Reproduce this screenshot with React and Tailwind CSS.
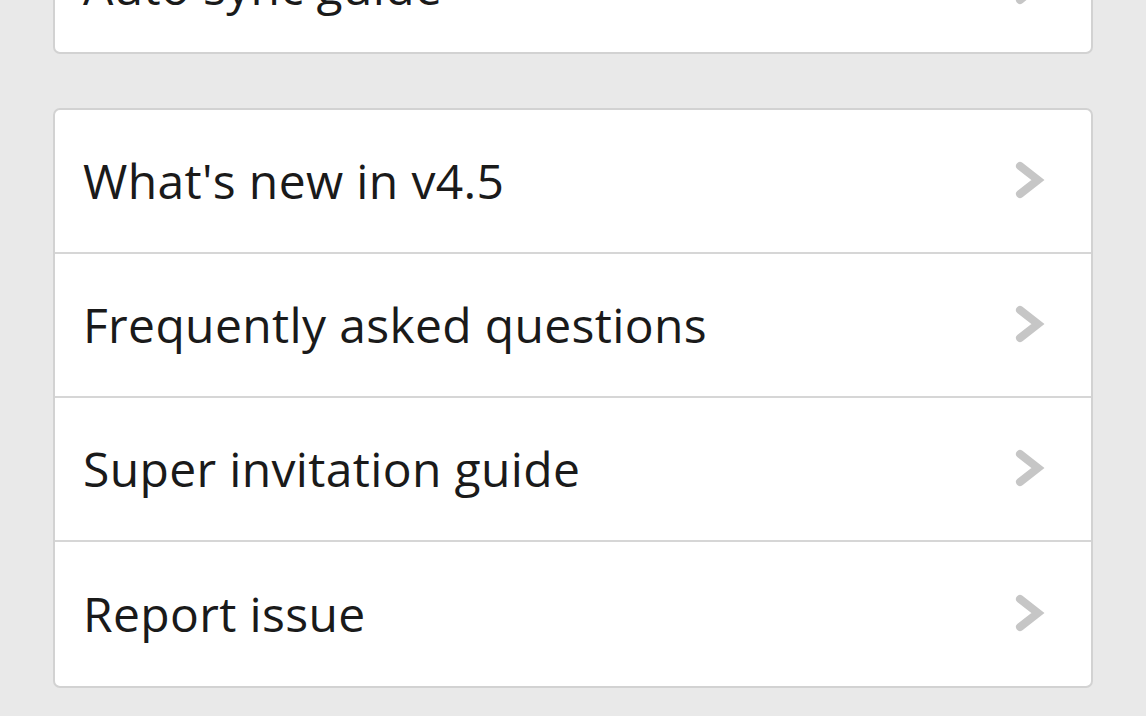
import { useState } from 'react';

const Chevron = () => (
    <svg width="36" height="40" viewBox="0 0 36 40" className="shrink-0">
        <path d="M9 5 L27 19 L9 33" fill="none" stroke="#c6c6c6" strokeWidth="8" strokeLinecap="round" strokeLinejoin="miter" />
    </svg>
);

function Row({ label, last, extra }) {
    return (
        <div className={'flex items-center justify-between h-[144px] pl-[28px] pr-[44px] ' + (extra || '') + ' ' + (last ? '' : 'border-b-2 border-[#d6d6d6]')}>
            <span className="text-[48px] text-[#1a1a1a] tracking-[0.35px]">{label}</span>
            <Chevron />
        </div>
    );
}

function App() {
    const [items] = useState([
        "What's new in v4.5",
        'Frequently asked questions',
        'Super invitation guide',
        'Report issue',
    ]);

    return (
        <div className="w-[1146px] h-[716px] overflow-hidden bg-[#e9e9e9] px-[53px]" style={{ fontFamily: '"Open Sans", "Noto Sans", sans-serif' }}>
            {/* card cut off at the top */}
            <div className="-mt-[94px] bg-white rounded-[7px] border-2 border-[#d2d2d2]">
                <Row label="Auto sync guide" last extra="pt-[14px]" />
            </div>

            <div className="mt-[54px] bg-white rounded-[7px] border-2 border-[#d2d2d2] overflow-hidden">
                {items.map((label, i) => (
                    <Row key={i} label={label} last={i === items.length - 1} />
                ))}
            </div>
        </div>
    );
}

export default App;
